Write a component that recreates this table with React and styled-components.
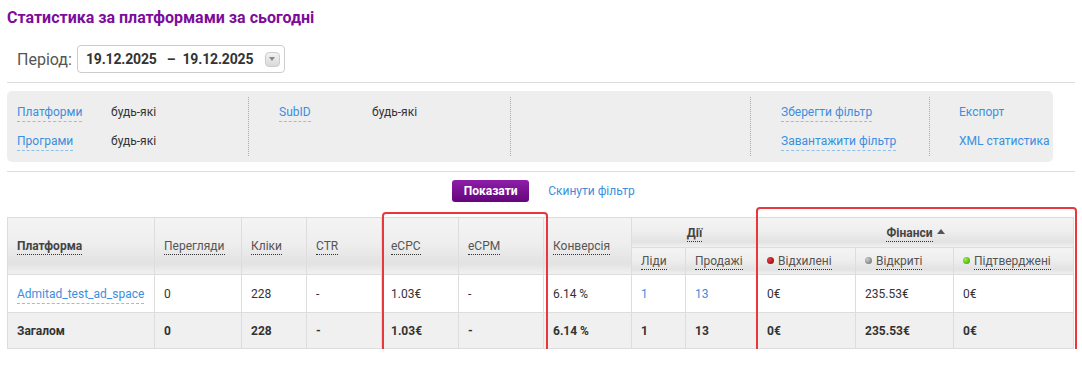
import React from "react";
import styled, { createGlobalStyle } from "styled-components";

const GlobalStyle = createGlobalStyle`
  body {
    margin: 0;
    background: #fff;
    font-family: Roboto, "Liberation Sans", Arial, sans-serif;
    color: #333;
  }
`;

const Page = styled.div`
  padding: 0 7px;
  width: 1068px;
`;

const Title = styled.h1`
  margin: 0;
  padding-top: 8px;
  font-size: 16px;
  line-height: 20px;
  font-weight: 700;
  color: #7d0c9b;
`;

const PeriodRow = styled.div`
  display: flex;
  align-items: center;
  gap: 5px;
  margin-top: 17px;
  padding-left: 10px;
`;

const PeriodLabel = styled.span`
  font-size: 16px;
  color: #555;
`;

const DateBox = styled.div`
  display: flex;
  align-items: center;
  width: 208px;
  height: 28px;
  box-sizing: border-box;
  border: 1px solid #ccc;
  border-radius: 4px;
  padding: 0 4px 0 8px;
  font-size: 14px;
  font-weight: 700;
  color: #333;
  letter-spacing: -0.15px;
`;

const Dash = styled.span`
  margin: 0 7px 0 10px;
`;

const DropButton = styled.span`
  margin-left: auto;
  width: 15px;
  height: 15px;
  border-radius: 4px;
  background: linear-gradient(#f2f2f2, #d9d9d9);
  border: 1px solid #ccc;
  box-sizing: border-box;
  display: flex;
  align-items: center;
  justify-content: center;
  &::after {
    content: "";
    border-left: 3px solid transparent;
    border-right: 3px solid transparent;
    border-top: 4px solid #888;
  }
`;

const Rule = styled.div`
  border-top: 1px solid #ddd;
  margin-top: ${(p) => p.$top}px;
`;

const FilterPanel = styled.div`
  display: grid;
  grid-template-columns: 241px 262px 240px 179px 124px;
  height: 71px;
  margin-top: 8px;
  width: 1046px;
  background: #eee;
  border-radius: 5px;
  box-sizing: border-box;
  padding: 6px 0;
`;

const FilterGroup = styled.div`
  display: flex;
  flex-direction: column;
  gap: 7px;
  padding: 4px 0 0 ${(p) => p.$pad}px;
  border-left: ${(p) => (p.$sep ? "1px dotted #aaa" : "none")};
`;

const FilterRow = styled.div`
  display: flex;
  align-items: center;
  height: 22px;
  font-size: 12px;
`;

const FilterLink = styled.span`
  width: ${(p) => p.$w || "auto"};
  flex-shrink: 0;
  color: #3b8fe0;
  span {
    border-bottom: ${(p) => (p.$plain ? "none" : "1px dashed #8fc0ec")};
    padding-bottom: 2px;
  }
`;

const FilterValue = styled.span`
  color: #333;
`;

const ActionRow = styled.div`
  display: flex;
  justify-content: center;
  align-items: center;
  gap: 19px;
  margin-top: 8px;
  padding-left: 5px;
`;

const ShowButton = styled.button`
  width: 77px;
  height: 22px;
  border: none;
  border-radius: 3px;
  background: linear-gradient(#8e1fa8, #65047d);
  color: #fff;
  font-family: inherit;
  font-size: 12px;
  font-weight: 700;
`;

const ResetLink = styled.span`
  font-size: 12px;
  color: #3b8fe0;
`;

const TableWrap = styled.div`
  position: relative;
  margin-top: 15px;
  width: 1066px;
`;

const Table = styled.table`
  border-collapse: collapse;
  table-layout: fixed;
  width: 1066px;
  font-size: 12px;
  color: #333;
`;

const Th = styled.th`
  height: ${(p) => p.$h}px;
  padding: 0 9px;
  box-sizing: border-box;
  border: 1px solid #ddd;
  text-align: ${(p) => (p.$center ? "center" : "left")};
  font-weight: ${(p) => (p.$bold ? 700 : 400)};
  color: ${(p) => (p.$bold ? "#444" : "#555")};
  background: linear-gradient(#f4f4f4 0%, #eeeeee 45%, #e2e2e2 80%, #f2f2f2 100%);
  white-space: nowrap;
`;

const HeadText = styled.span`
  border-bottom: 1px dotted #333;
  padding-bottom: 1px;
`;

const Td = styled.td`
  height: ${(p) => p.$h}px;
  padding: 0 9px;
  box-sizing: border-box;
  border: 1px solid #ddd;
  font-weight: ${(p) => (p.$bold ? 700 : 400)};
  background: ${(p) => (p.$bold ? "#f0f0f0" : "#fff")};
  white-space: nowrap;
`;

const CellLink = styled.span`
  color: #3b8fe0;
  border-bottom: ${(p) => (p.$dashed ? "1px dashed #8fc0ec" : "none")};
  padding-bottom: 2px;
`;

const Dot = styled.span`
  display: inline-block;
  width: 7px;
  height: 7px;
  border-radius: 50%;
  margin-right: 4px;
  vertical-align: 1px;
  background: radial-gradient(circle at 35% 35%, ${(p) => p.$light}, ${(p) => p.$dark});
`;

const Arrow = styled.span`
  display: inline-block;
  margin-left: 4px;
  vertical-align: 3px;
  border-left: 4px solid transparent;
  border-right: 4px solid transparent;
  border-bottom: 5px solid #555;
`;

const Highlight = styled.div`
  position: absolute;
  left: ${(p) => p.$x}px;
  top: ${(p) => p.$y}px;
  width: ${(p) => p.$w}px;
  height: ${(p) => p.$h}px;
  box-sizing: border-box;
  border: 2px solid #e8383d;
  border-radius: 4px;
  pointer-events: none;
`;

const widths = [147, 87, 65, 75, 77, 85, 88, 54, 72, 98, 98, 120];

const filterGroups = [
  { pad: 10, sep: false, rows: [["Платформи", "будь-які"], ["Програми", "будь-які"]], w: "94px" },
  { pad: 30, sep: true, rows: [["SubID", "будь-які"]], w: "93px" },
  { pad: 0, sep: true, rows: [] },
  { pad: 30, sep: true, rows: [["Зберегти фільтр"], ["Завантажити фільтр"]] },
  { pad: 29, sep: true, rows: [["Експорт"], ["XML статистика"]], plain: true },
];

const data = {
  row: ["0", "228", "-", "1.03€", "-", "6.14 %", "1", "13", "0€", "235.53€", "0€"],
  total: ["0", "228", "-", "1.03€", "-", "6.14 %", "1", "13", "0€", "235.53€", "0€"],
};

export default function App() {
  return (
    <Page>
      <GlobalStyle />
      <Title>Статистика за платформами за сьогодні</Title>
      <PeriodRow>
        <PeriodLabel>Період:</PeriodLabel>
        <DateBox>
          19.12.2025<Dash>–</Dash>19.12.2025
          <DropButton />
        </DateBox>
      </PeriodRow>
      <Rule $top={9} />
      <FilterPanel>
        {filterGroups.map((g, i) => (
          <FilterGroup key={i} $pad={g.pad} $sep={g.sep}>
            {g.rows.map((r) => (
              <FilterRow key={r[0]}>
                <FilterLink $w={r[1] ? g.w : undefined} $plain={g.plain}>
                  <span>{r[0]}</span>
                </FilterLink>
                {r[1] && <FilterValue>{r[1]}</FilterValue>}
              </FilterRow>
            ))}
          </FilterGroup>
        ))}
      </FilterPanel>
      <Rule $top={9} />
      <ActionRow>
        <ShowButton>Показати</ShowButton>
        <ResetLink>Скинути фільтр</ResetLink>
      </ActionRow>
      <TableWrap>
        <Table>
          <colgroup>
            {widths.map((w, i) => (
              <col key={i} style={{ width: w }} />
            ))}
          </colgroup>
          <thead>
            <tr>
              <Th rowSpan={2} $bold><HeadText>Платформа</HeadText></Th>
              <Th rowSpan={2}><HeadText>Перегляди</HeadText></Th>
              <Th rowSpan={2}><HeadText>Кліки</HeadText></Th>
              <Th rowSpan={2}><HeadText>CTR</HeadText></Th>
              <Th rowSpan={2}><HeadText>eCPC</HeadText></Th>
              <Th rowSpan={2}><HeadText>eCPM</HeadText></Th>
              <Th rowSpan={2}><HeadText>Конверсія</HeadText></Th>
              <Th colSpan={2} $h={30} $center $bold><HeadText>Дії</HeadText></Th>
              <Th colSpan={3} $h={30} $center $bold>
                <HeadText>Фінанси</HeadText>
                <Arrow />
              </Th>
            </tr>
            <tr>
              <Th $h={27}><HeadText>Ліди</HeadText></Th>
              <Th $h={27}><HeadText>Продажі</HeadText></Th>
              <Th $h={27}>
                <Dot $light="#e04040" $dark="#8a0000" />
                <HeadText>Відхилені</HeadText>
              </Th>
              <Th $h={27}>
                <Dot $light="#cccccc" $dark="#666666" />
                <HeadText>Відкриті</HeadText>
              </Th>
              <Th $h={27}>
                <Dot $light="#9ef04a" $dark="#2f9a00" />
                <HeadText>Підтверджені</HeadText>
              </Th>
            </tr>
          </thead>
          <tbody>
            <tr>
              <Td $h={38}>
                <CellLink $dashed>Admitad_test_ad_space</CellLink>
              </Td>
              {data.row.map((v, i) => (
                <Td key={i} $h={38}>
                  {i === 6 || i === 7 ? <CellLink>{v}</CellLink> : v}
                </Td>
              ))}
            </tr>
            <tr>
              <Td $h={36} $bold>Загалом</Td>
              {data.total.map((v, i) => (
                <Td key={i} $h={36} $bold>{v}</Td>
              ))}
            </tr>
          </tbody>
        </Table>
        <Highlight $x={375} $y={-5} $w={166} $h={142} />
        <Highlight $x={749} $y={-10} $w={321} $h={146} />
      </TableWrap>
    </Page>
  );
}
